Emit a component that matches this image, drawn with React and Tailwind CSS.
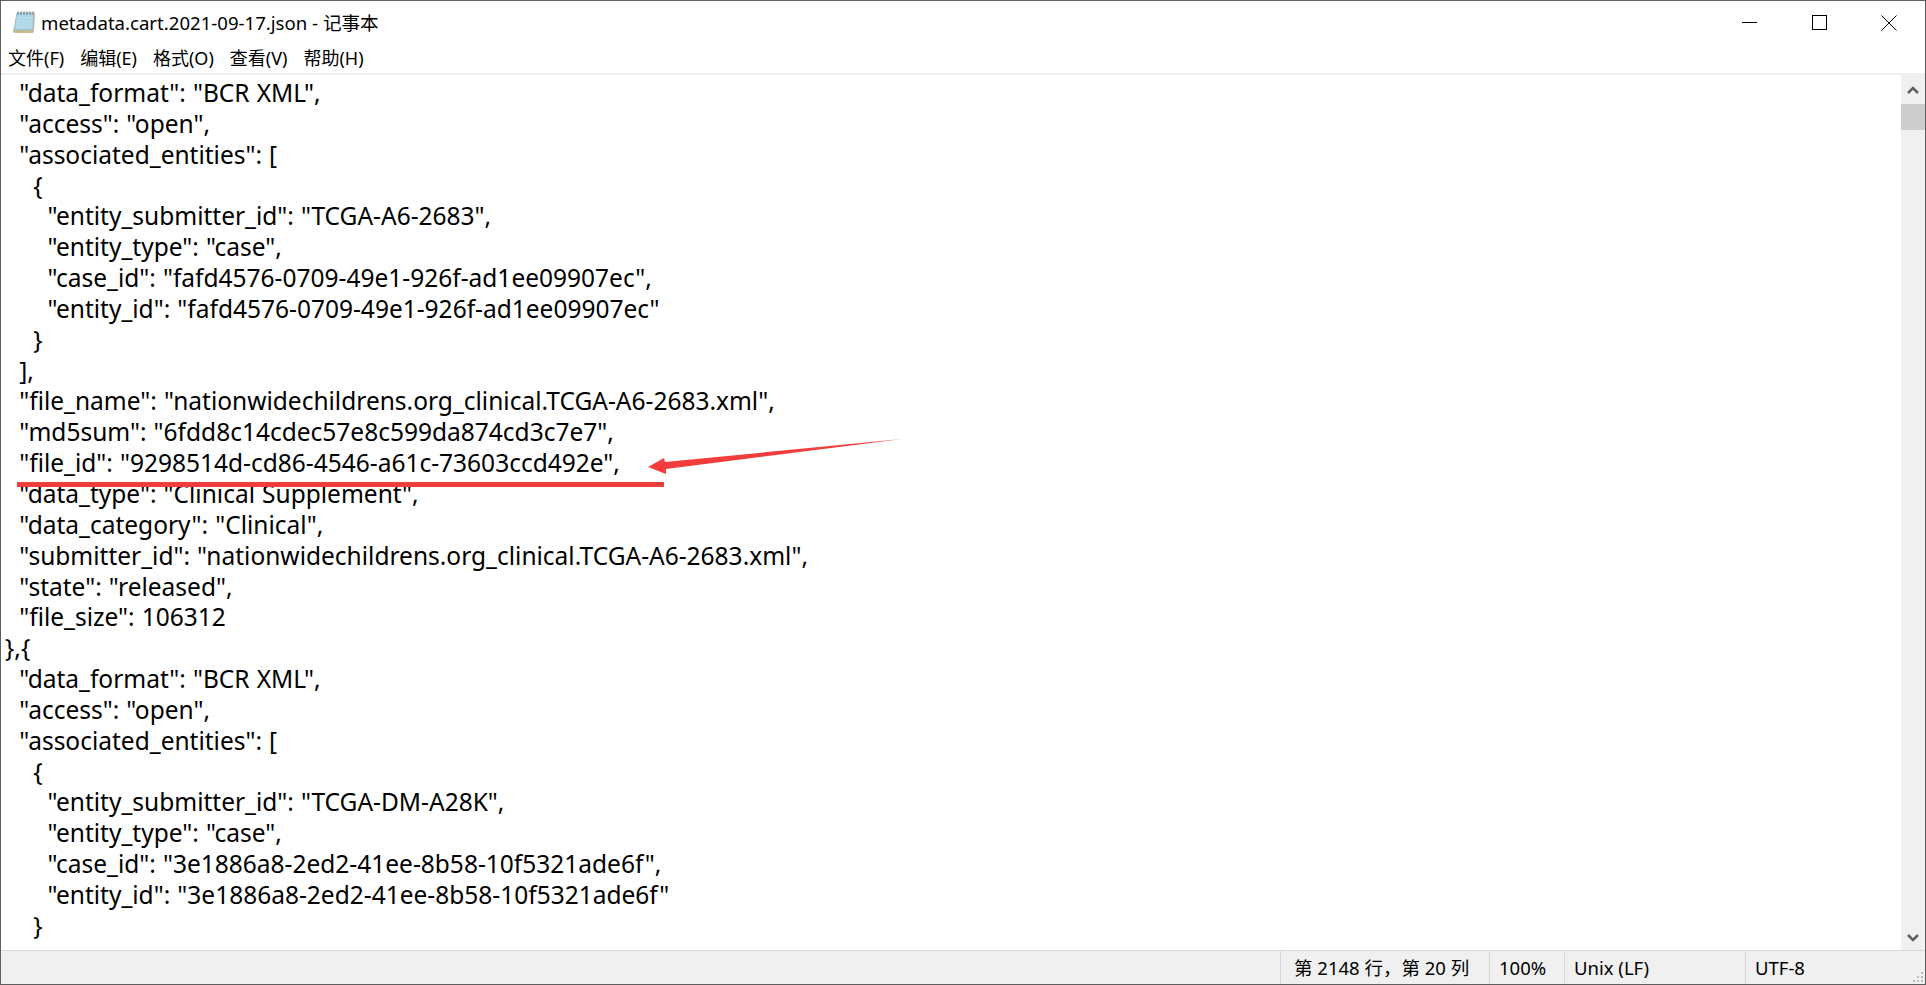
const lines = [
  '  "data_format": "BCR XML",',
  '  "access": "open",',
  '  "associated_entities": [',
  '    {',
  '      "entity_submitter_id": "TCGA-A6-2683",',
  '      "entity_type": "case",',
  '      "case_id": "fafd4576-0709-49e1-926f-ad1ee09907ec",',
  '      "entity_id": "fafd4576-0709-49e1-926f-ad1ee09907ec"',
  '    }',
  '  ],',
  '  "file_name": "nationwidechildrens.org_clinical.TCGA-A6-2683.xml",',
  '  "md5sum": "6fdd8c14cdec57e8c599da874cd3c7e7",',
  '  "file_id": "9298514d-cd86-4546-a61c-73603ccd492e",',
  '  "data_type": "Clinical Supplement",',
  '  "data_category": "Clinical",',
  '  "submitter_id": "nationwidechildrens.org_clinical.TCGA-A6-2683.xml",',
  '  "state": "released",',
  '  "file_size": 106312',
  '},{',
  '  "data_format": "BCR XML",',
  '  "access": "open",',
  '  "associated_entities": [',
  '    {',
  '      "entity_submitter_id": "TCGA-DM-A28K",',
  '      "entity_type": "case",',
  '      "case_id": "3e1886a8-2ed2-41ee-8b58-10f5321ade6f",',
  '      "entity_id": "3e1886a8-2ed2-41ee-8b58-10f5321ade6f"',
  '    }',
]

const menus = ['文件(F)', '编辑(E)', '格式(O)', '查看(V)', '帮助(H)']

const NotepadIcon = () => (
  <svg width="24" height="24" viewBox="0 0 24 24">
    <path d="M5 3h18l-1 18-1 2H3l-2-1z" fill="#c9b98f" />
    <path d="M5 3h17l-1 17H2z" fill="#a8d6e6" stroke="#9fb6bf" strokeWidth="0.7" />
    <path d="M5 8h15M5 11h15M4 14h15M4 17h15" stroke="#c4e4ee" strokeWidth="1" />
    <path d="M6 1.5v3M9 1.5v3M12 1.5v3M15 1.5v3M18 1.5v3M21 1.5v3" stroke="#7b8288" strokeWidth="1.3" />
  </svg>
)

export default function App() {
  return (
    <div className="relative flex h-[985px] w-[1926px] flex-col overflow-hidden border border-[#5f5f5f] bg-white font-['Noto_Sans','Noto_Sans_CJK_SC',sans-serif] text-black">
      <div className="flex h-[43px] items-center justify-between">
        <div className="flex items-center gap-[5px] pl-[11px] text-[18.6px]">
          <NotepadIcon />
          <span>metadata.cart.2021-09-17.json - 记事本</span>
        </div>
        <div className="flex items-center pr-px">
          <div className="flex h-[43px] w-[70px] items-center justify-center">
            <div className="h-px w-[15px] bg-black" />
          </div>
          <div className="flex h-[43px] w-[70px] items-center justify-center">
            <div className="h-[15px] w-[15px] border border-black" />
          </div>
          <div className="flex h-[43px] w-[70px] items-center justify-center">
            <svg width="16" height="16" viewBox="0 0 16 16">
              <path d="M0.5 0.5l15 15M15.5 0.5l-15 15" stroke="#000" strokeWidth="1" fill="none" />
            </svg>
          </div>
        </div>
      </div>

      <div className="flex h-[29px] items-center gap-[16px] pl-[7px] text-[18px]">
        {menus.map((m) => (
          <span key={m}>{m}</span>
        ))}
      </div>
      <div className="h-[2px] bg-[#f0f0f0]" />

      <div className="flex min-h-0 flex-1">
        <div className="flex-1 overflow-hidden pt-[3px] pl-[4px] text-[24.5px] leading-[30.85px] [word-spacing:0.7px] whitespace-pre">
          {lines.map((l, i) => (
            <div key={i}>{l}</div>
          ))}
        </div>
        <div className="flex w-[24px] flex-col bg-[#f0f0f0]">
          <div className="flex h-[29px] items-center justify-center">
            <svg width="12" height="10" viewBox="0 0 12 10"><path d="M1 8l5-5 5 5" stroke="#606060" strokeWidth="2.5" fill="none" /></svg>
          </div>
          <div className="h-[26px] bg-[#cdcdcd]" />
          <div className="flex-1" />
          <div className="flex h-[24px] items-center justify-center">
            <svg width="12" height="10" viewBox="0 0 12 10"><path d="M1 2l5 5 5-5" stroke="#606060" strokeWidth="2.5" fill="none" /></svg>
          </div>
        </div>
      </div>

      <div className="relative flex h-[34px] items-center border-t border-[#d7d7d7] bg-[#f0f0f0] text-[18.5px]">
        <div className="w-[1279px]" />
        <div className="flex h-full w-[209px] items-center border-l border-[#d7d7d7] pl-[13px]">第 2148 行，第 20 列</div>
        <div className="flex h-full w-[75px] items-center border-l border-[#d7d7d7] pl-[9px]">100%</div>
        <div className="flex h-full w-[181px] items-center border-l border-[#d7d7d7] pl-[9px]">Unix (LF)</div>
        <div className="flex h-full flex-1 items-center border-l border-[#d7d7d7] pl-[9px]">UTF-8</div>
        {/* resize grip */}
        <svg className="absolute right-px bottom-px" width="12" height="12" viewBox="0 0 12 12" fill="#bdbdbd">
          <rect x="9" y="1" width="2" height="2" />
          <rect x="5" y="5" width="2" height="2" />
          <rect x="9" y="5" width="2" height="2" />
          <rect x="1" y="9" width="2" height="2" />
          <rect x="5" y="9" width="2" height="2" />
          <rect x="9" y="9" width="2" height="2" />
        </svg>
      </div>

      {/* red annotation drawn over the text */}
      <svg className="absolute top-[-1px] left-[-1px]" width="1926" height="985">
        <rect x="17" y="482" width="647" height="5" fill="#f33c3c" />
        <path d="M648 467L664 458L665 462L902 439L666 469L666 474Z" fill="#f33c3c" />
      </svg>
    </div>
  )
}
